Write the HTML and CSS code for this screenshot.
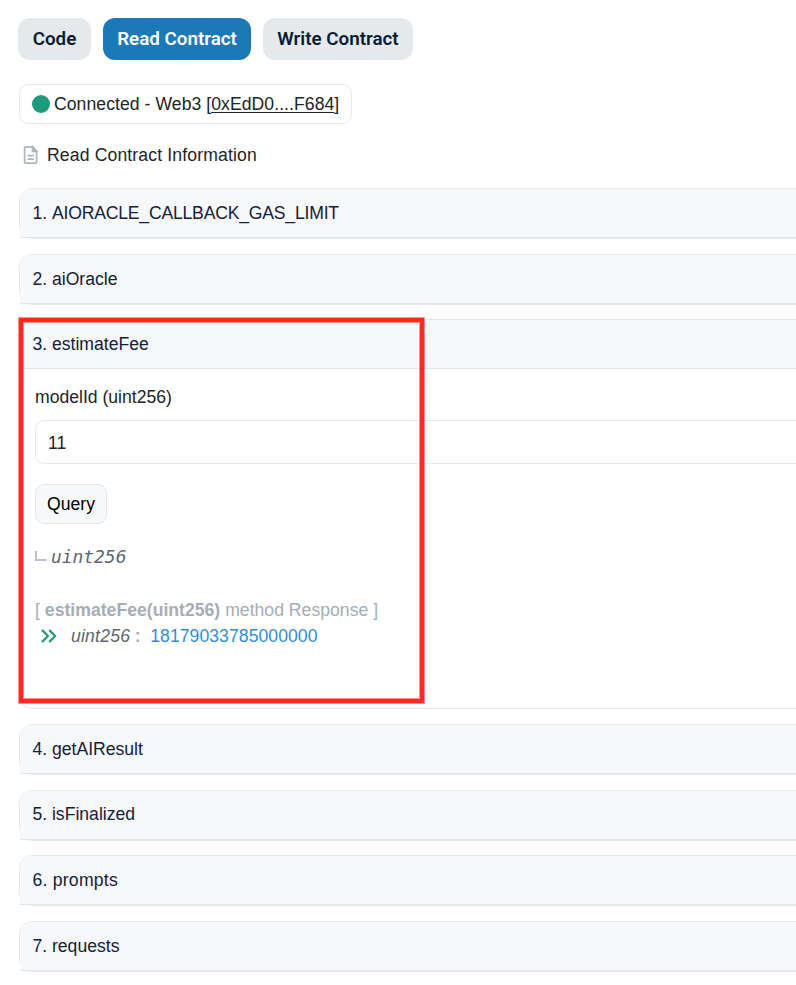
FILE: index.html
```html
<!DOCTYPE html>
<html lang="en">
<head>
<meta charset="utf-8">
<title>Read Contract</title>
<link rel="stylesheet" href="styles.css">
</head>
<body>
<main class="page">
  <nav class="tabs">
    <a class="tab tab-code">Code</a>
    <a class="tab tab-read active">Read Contract</a>
    <a class="tab tab-write">Write Contract</a>
  </nav>
  <div class="wallet"><span class="dot"></span><span class="wallet-text">Connected - Web3 [<u>0xEdD0....F684</u>]</span></div>
  <div class="info">
    <svg class="doc" width="16" height="20" viewBox="0 0 16 20" fill="none" stroke="#adb5bd" stroke-width="1.7">
      <path d="M3.4 1.8h6.1L13.6 6.2v10.2a1.8 1.8 0 0 1-1.8 1.8H3.4a1.8 1.8 0 0 1-1.8-1.8V3.6a1.8 1.8 0 0 1 1.8-1.8z"/>
      <path d="M9.5 1.8V6.3H13.6z" fill="#adb5bd"/>
      <path d="M4.4 10.6h6.4M4.4 14.2h6.4"/>
    </svg>
    <span class="info-text">Read Contract Information</span>
  </div>
  <div class="methods">
    <section class="card"><header class="card-head"><span>1. <span class="constant">AIORACLE_CALLBACK_GAS_LIMIT</span></span></header></section>
    <section class="card"><header class="card-head"><span>2. aiOracle</span></header></section>
    <section class="card open">
      <header class="card-head"><span>3. estimateFee</span></header>
      <div class="card-body">
        <label class="label" for="model">modelId (uint256)</label>
        <input class="field" id="model" value="11">
        <button class="query">Query</button>
        <div class="returns">
          <svg width="12" height="12" viewBox="0 0 12 12" fill="none" stroke="#b9c1d0" stroke-width="2"><path d="M1 0V9H11.5"/></svg>
          <span>uint256</span>
        </div>
        <div class="response"><span>[ <b>estimateFee(uint256)</b> method Response ]</span></div>
        <div class="result">
          <svg width="16" height="14" viewBox="0 0 16 14" fill="none" stroke="#1e9a7c" stroke-width="2.2" stroke-linecap="round" stroke-linejoin="round"><path d="M1.6 1.6 7 7 1.6 12.4M8.8 1.6 14.2 7 8.8 12.4"/></svg>
          <i class="type">uint256</i><b class="colon">:</b><span class="value">18179033785000000</span>
        </div>
      </div>
      <div class="highlight"></div>
    </section>
    <section class="card"><header class="card-head"><span>4. getAIResult</span></header></section>
    <section class="card"><header class="card-head raised"><span>5. isFinalized</span></header></section>
    <section class="card"><header class="card-head"><span class="wide">6. prompts</span></header></section>
    <section class="card"><header class="card-head"><span>7. requests</span></header></section>
  </div>
</main>
</body>
</html>
```
FILE: styles.css
```css
* { box-sizing: border-box; }
body {
  margin: 0;
  background: #fff;
  color: #212529;
  font: 17.6px/26px "Liberation Sans", Arial, sans-serif;
  overflow: hidden;
}
.page { padding: 18px 0 0 18px; }
.tabs { display: flex; gap: 12px; }
.tab {
  height: 42px;
  border-radius: 12px;
  background: #e6e9ec;
  color: #081d35;
  font: 600 18.8px/42px Roboto, sans-serif;
  text-align: center;
  white-space: nowrap;
}
.tab-code { width: 73px; }
.tab-read { width: 148px; }
.tab-write { width: 150px; }
.tab.active { background: #1b79ba; color: #fff; }
.wallet {
  display: flex;
  align-items: center;
  width: 333px;
  height: 40px;
  margin: 24px 0 0 1px;
  padding-left: 11.5px;
  border: 1px solid #e6e9ec;
  border-radius: 9px;
  white-space: nowrap;
}
.wallet-text { letter-spacing: .06px; }
.wallet u { text-underline-offset: 2px; text-decoration-thickness: 1px; }
.dot { width: 18px; height: 18px; margin: -1px 4.5px 0 0; border-radius: 50%; background: #1e9a7c; }
.info { display: flex; align-items: center; height: 26px; margin-top: 18px; }
.info-text { letter-spacing: .14px; }
.doc { margin: -1px 8px 0 5px; }
.methods { display: flex; flex-direction: column; gap: 14.67px; margin: 20px -20px 0 1px; }
.card {
  flex: none;
  height: 51px;
  border: 1px solid #e6e9ec;
  border-radius: 13px;
}
.card-head {
  height: 49px;
  padding-left: 12.4px;
  border-bottom: 1px solid #e2e6ea;
  border-radius: 12px 0 0 0;
  background: #f7f8fa;
  color: #14213a;
  line-height: 48px;
}
.card-head.raised { line-height: 47px; }
.constant { letter-spacing: -.2px; }
.wide { letter-spacing: .25px; }
.card.open { position: relative; height: 390px; }
.card-body { padding: 15px 0 0 15px; }
.label { display: block; }
.field {
  display: block;
  width: 100%;
  height: 44px;
  margin-top: 10px;
  padding: 2px 12px 0;
  border: 1px solid #e6e9ec;
  border-radius: 9px;
  background: #fff;
  color: #212529;
  font: inherit;
}
.query {
  display: block;
  width: 72px;
  height: 40px;
  margin-top: 20px;
  padding: 0;
  border: 1px solid #e2e6ea;
  border-radius: 9px;
  background: #f7f8fa;
  color: #000;
  font: inherit;
}
.returns {
  display: flex;
  align-items: center;
  gap: 4px;
  height: 26px;
  margin-top: 20px;
  color: #5d666e;
  font: italic 17.9px/26px "DejaVu Sans Mono", monospace;
}
.response { height: 26px; margin-top: 27px; color: #a5adb6; letter-spacing: .02px; white-space: pre; }
.result { display: flex; align-items: center; height: 26px; padding-left: 6px; }
.type { margin-left: 14px; color: #5d666e; letter-spacing: .2px; }
.colon { margin-left: 4.5px; color: #a5adb6; }
.value { margin-left: 9.8px; color: #318ed6; letter-spacing: .05px; }
.highlight {
  position: absolute;
  top: -2px;
  left: -1px;
  width: 405px;
  height: 385px;
  border: 4px solid #ff291d;
  box-shadow: 0 0 0 1px rgba(255, 41, 29, .5), inset 0 0 0 1px rgba(255, 41, 29, .5);
}
```
